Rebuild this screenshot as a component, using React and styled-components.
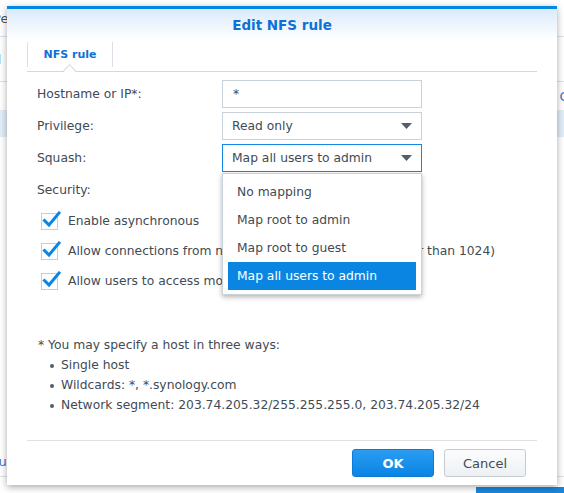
import React from 'react'
import styled, { createGlobalStyle } from 'styled-components'

const GlobalStyle = createGlobalStyle`
  html, body {
    margin: 0;
    padding: 0;
    background: #ffffff;
  }
  body {
    font-family: "DejaVu Sans", Verdana, sans-serif;
    font-size: 12.3px;
    color: #414b55;
  }
  * { box-sizing: border-box; }
`

const squashOptions = ['No mapping', 'Map root to admin', 'Map root to guest', 'Map all users to admin']

const securityOptions = [
  'Enable asynchronous',
  'Allow connections from non-privileged ports (ports higher than 1024)',
  'Allow users to access mounted subfolders',
]

const hostWays = [
  'Single host',
  'Wildcards: *, *.synology.com',
  'Network segment: 203.74.205.32/255.255.255.0, 203.74.205.32/24',
]

function Arrow() {
  return (
    <svg width="11" height="6" viewBox="0 0 11 6">
      <path d="M0 0 L11 0 L5.5 6 Z" fill="#545e68" />
    </svg>
  )
}

function Check() {
  return (
    <svg width="22" height="22" viewBox="0 0 22 22">
      <path d="M4.5 11.5 L9 16 L19 4" fill="none" stroke="#0a86e2" strokeWidth="3" strokeLinecap="square" />
    </svg>
  )
}

export default function App() {
  return (
    <Screen>
      <GlobalStyle />
      <Page>
        <BgRow $height={37}><BgText>Pe</BgText></BgRow>
        <BgRow $height={45}><BgText>d</BgText></BgRow>
        <BgRow $height={28} $noLine><BgLink>Cr</BgLink></BgRow>
        <BgRow $height={27} $noLine $selected />
        <BgSpacer />
        <BgRow $height={30}><BgLinkLeft>lu</BgLinkLeft></BgRow>
        <BgBottom><BgButton /></BgBottom>
      </Page>

      <Dialog>
        <Header>Edit NFS rule</Header>
        <Tabs>
          <Tab>
            NFS rule
            <Notch />
          </Tab>
        </Tabs>

        <Body>
          <Form>
            <Label>Hostname or IP*:</Label>
            <TextInput>*</TextInput>

            <Label>Privilege:</Label>
            <Select>
              <span>Read only</span>
              <Arrow />
            </Select>

            <Label>Squash:</Label>
            <SelectWrap>
              <Select $focused>
                <span>Map all users to admin</span>
                <Arrow />
              </Select>
              <Menu>
                {squashOptions.map((o, i) => (
                  <MenuItem key={o} $active={i === squashOptions.length - 1}>{o}</MenuItem>
                ))}
              </Menu>
            </SelectWrap>

            <Label>Security:</Label>
            <span />
          </Form>

          <Checks>
            {securityOptions.map((o) => (
              <CheckRow key={o}>
                <Box><Check /></Box>
                <CheckLabel>{o}</CheckLabel>
              </CheckRow>
            ))}
          </Checks>

          <Note>
            <NoteTitle>* You may specify a host in three ways:</NoteTitle>
            <NoteList>
              {hostWays.map((w) => <li key={w}>{w}</li>)}
            </NoteList>
          </Note>
        </Body>

        <Footer>
          <Button $primary>OK</Button>
          <Button>Cancel</Button>
        </Footer>
      </Dialog>
    </Screen>
  )
}

const Screen = styled.div`
  position: relative;
  width: 564px;
  height: 493px;
  overflow: hidden;
  background: #fff;
`

const Page = styled.div`
  display: flex;
  flex-direction: column;
  height: 100%;
`

const BgRow = styled.div`
  height: ${(p) => p.$height}px;
  display: flex;
  align-items: center;
  justify-content: space-between;
  border-bottom: ${(p) => (p.$noLine ? 'none' : '1px solid #dde2e7')};
  background: ${(p) => (p.$selected ? '#e1edf9' : 'transparent')};
`

const BgText = styled.span`
  margin-left: -7px;
  font-size: 13px;
  color: #4b545d;
`

const BgLink = styled.span`
  margin-left: auto;
  margin-right: -10px;
  font-size: 13px;
  color: #2f76c9;
`

const BgLinkLeft = styled.span`
  margin-left: -5px;
  font-size: 13px;
  color: #3e6fd0;
`

const BgSpacer = styled.div`
  flex: 1;
`

const BgBottom = styled.div`
  height: 16px;
  display: flex;
  justify-content: flex-end;
  align-items: flex-end;
`

const BgButton = styled.div`
  width: 88px;
  height: 6px;
  background: #1a86dc;
`

const Dialog = styled.div`
  position: absolute;
  left: 7px;
  top: 6px;
  width: 550px;
  height: 479px;
  display: flex;
  flex-direction: column;
  background: #fff;
  border-top: 3px solid #0388e6;
  box-shadow: 0 2px 7px rgba(0, 0, 0, 0.35);
`

const Header = styled.div`
  height: 31px;
  flex: none;
  display: flex;
  align-items: center;
  justify-content: center;
  padding-top: 1px;
  background: linear-gradient(#dbeafb, #ffffff);
  font-size: 13.5px;
  font-weight: bold;
  color: #0b72d6;
`

const Tabs = styled.div`
  height: 32px;
  flex: none;
  margin: 0 20px;
  display: flex;
  align-items: flex-start;
  border-bottom: 1px solid #d3d8de;
`

const Tab = styled.div`
  position: relative;
  width: 86px;
  height: 25px;
  margin-top: 2px;
  display: flex;
  align-items: center;
  justify-content: center;
  border-left: 1px solid #dbe0e6;
  border-right: 1px solid #dbe0e6;
  font-size: 11px;
  font-weight: bold;
  color: #0b72d6;
`

const Notch = styled.span`
  position: absolute;
  left: 37px;
  bottom: -8px;
  width: 9px;
  height: 9px;
  background: #fff;
  border-left: 1px solid #d3d8de;
  border-top: 1px solid #d3d8de;
  transform: rotate(45deg);
`

const Body = styled.div`
  flex: 1;
  padding: 8px 0 0 30px;
`

const Form = styled.div`
  display: grid;
  grid-template-columns: 185px 200px;
  grid-auto-rows: 28px;
  row-gap: 4px;
  align-items: center;
`

const Label = styled.div`
  color: #414b55;
`

const TextInput = styled.div`
  height: 28px;
  padding: 0 10px;
  display: flex;
  align-items: center;
  border: 1px solid #c9d1d9;
  color: #414b55;
`

const SelectWrap = styled.div`
  position: relative;
  height: 28px;
`

const Select = styled.div`
  height: 28px;
  padding: 0 9px 0 9px;
  display: flex;
  align-items: center;
  justify-content: space-between;
  border: 1px solid ${(p) => (p.$focused ? '#1287e6' : '#c9d1d9')};
  color: #414b55;
`

const Menu = styled.div`
  position: absolute;
  top: 29px;
  left: 0;
  width: 200px;
  padding: 4px 5px 4px;
  background: #fff;
  border: 1px solid #c9d1d9;
  box-shadow: 0 2px 5px rgba(0, 0, 0, 0.3);
  z-index: 2;
`

const MenuItem = styled.div`
  height: 28px;
  padding-left: 9px;
  display: flex;
  align-items: center;
  background: ${(p) => (p.$active ? '#0a86e2' : 'transparent')};
  color: ${(p) => (p.$active ? '#ffffff' : '#414b55')};
`

const Checks = styled.div`
  margin-top: 2px;
  display: flex;
  flex-direction: column;
`

const CheckRow = styled.div`
  height: 30px;
  display: flex;
  align-items: center;
  white-space: nowrap;
`

const Box = styled.span`
  position: relative;
  width: 17px;
  height: 17px;
  margin-left: 4px;
  margin-right: 10px;
  border: 1px solid #c6ced7;
  background: #fff;

  svg {
    position: absolute;
    left: -2px;
    top: -5px;
  }
`

const CheckLabel = styled.span`
  color: #414b55;
`

const Note = styled.div`
  margin-top: 39px;
  line-height: 20px;
  color: #414b55;
`

const NoteTitle = styled.div`
  margin-left: 1px;
`

const NoteList = styled.ul`
  margin: 0;
  padding-left: 24px;

  li {
    list-style: none;
    position: relative;
  }

  li::before {
    content: '';
    position: absolute;
    left: -11px;
    top: 9px;
    width: 4px;
    height: 4px;
    border-radius: 50%;
    background: #555e68;
  }
`

const Footer = styled.div`
  flex: none;
  margin: 0 20px;
  padding: 8px 11px 8px 0;
  display: flex;
  justify-content: flex-end;
  gap: 10px;
  border-top: 1px solid #dde1e5;
`

const Button = styled.button`
  width: 82px;
  height: 28px;
  border-radius: 3px;
  font-family: "DejaVu Sans", Verdana, sans-serif;
  font-size: 13px;
  font-weight: ${(p) => (p.$primary ? 'bold' : 'normal')};
  color: ${(p) => (p.$primary ? '#ffffff' : '#414b55')};
  border: 1px solid ${(p) => (p.$primary ? '#0b7bd8' : '#c5ccd4')};
  background: ${(p) =>
    p.$primary ? 'linear-gradient(#2a9df2, #0a84e3)' : 'linear-gradient(#fbfcfd, #eef1f4)'};
`
